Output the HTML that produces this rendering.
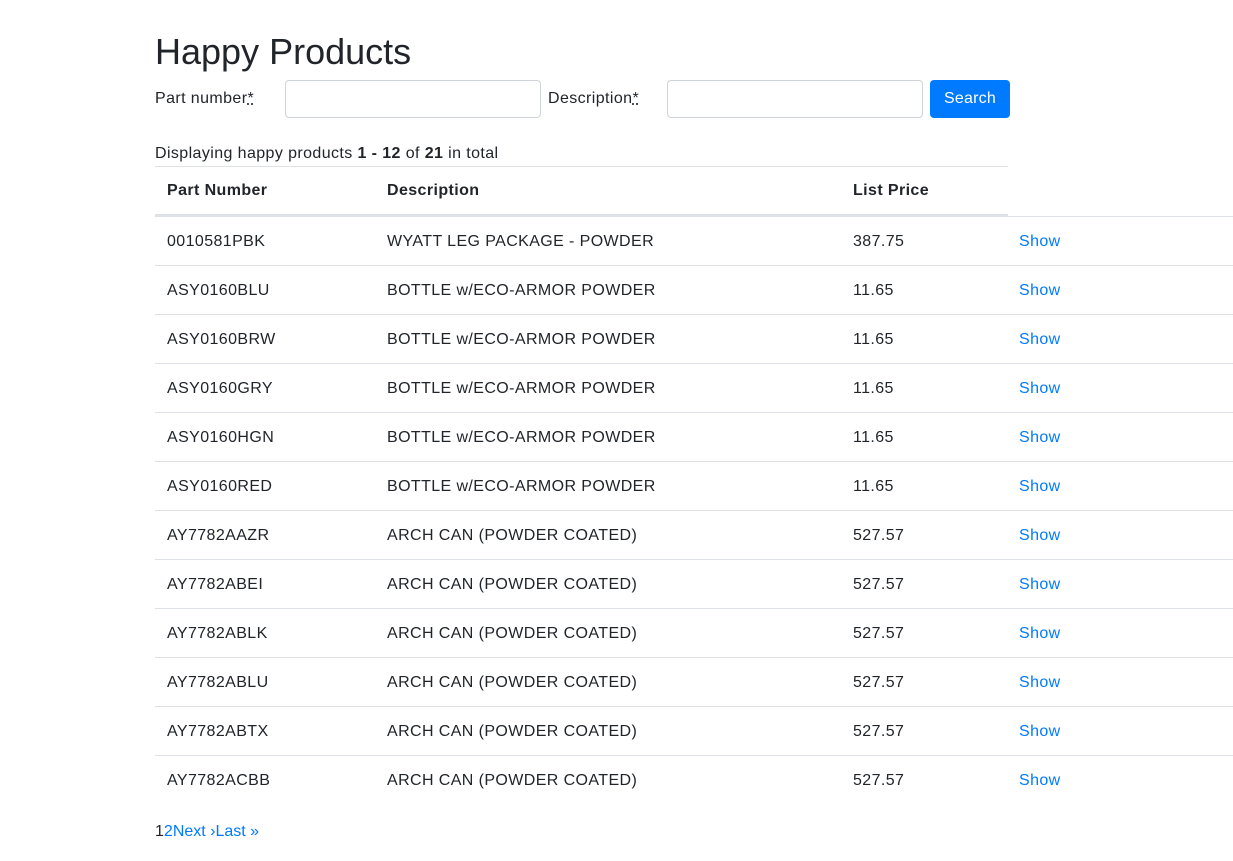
<!DOCTYPE html>
<html><head><meta charset="utf-8"><style>
*{box-sizing:border-box;margin:0;padding:0}
body{width:1233px;height:861px;background:#fff;font-family:"Liberation Sans",sans-serif;color:#212529;font-size:16px;position:relative;overflow:hidden;letter-spacing:.4px}
.a{position:absolute;white-space:nowrap}
h1{position:absolute;left:155px;top:31px;font-size:36px;font-weight:400;line-height:42px;letter-spacing:0}
.inp{position:absolute;top:80px;height:38px;width:256px;border:1px solid #ced4da;border-radius:4px}
.btn{position:absolute;left:930px;top:80px;width:80px;height:38px;background:#007bff;color:#fff;border-radius:4px;text-align:center;line-height:38px;font-size:16px}
abbr{text-decoration:underline dotted;}
.row{position:absolute;left:155px;width:1078px;height:49px;border-top:1px solid #dee2e6}
.row span{position:absolute;top:1px;line-height:48px}
.c1{left:12px}.c2{left:232px}.c3{left:698px}.c4{left:864px;color:#007bff}
a{color:#007bff;text-decoration:none}
</style></head><body>
<h1>Happy Products</h1>
<div class="a" style="left:155px;top:89px;line-height:20px">Part number<abbr>*</abbr></div>
<div class="inp" style="left:285px"></div>
<div class="a" style="left:548px;top:89px;line-height:20px">Description<abbr>*</abbr></div>
<div class="inp" style="left:667px"></div>
<div class="btn" style="letter-spacing:.2px">Search</div>
<div class="a" style="left:155px;top:144px;line-height:20px">Displaying happy products <b>1&nbsp;-&nbsp;12</b> of <b>21</b> in total</div>
<div class="a" style="left:155px;top:166px;width:853px;height:50px;border-top:1px solid #dee2e6;border-bottom:2px solid #dee2e6;font-weight:bold">
<span class="a" style="left:12px;top:15px">Part Number</span>
<span class="a" style="left:232px;top:15px">Description</span>
<span class="a" style="left:698px;top:15px">List Price</span>
</div>
<div class="row" style="top:216px"><span class="c1">0010581PBK</span><span class="c2">WYATT LEG PACKAGE - POWDER</span><span class="c3">387.75</span><span class="c4">Show</span></div>
<div class="row" style="top:265px"><span class="c1">ASY0160BLU</span><span class="c2">BOTTLE w/ECO-ARMOR POWDER</span><span class="c3">11.65</span><span class="c4">Show</span></div>
<div class="row" style="top:314px"><span class="c1">ASY0160BRW</span><span class="c2">BOTTLE w/ECO-ARMOR POWDER</span><span class="c3">11.65</span><span class="c4">Show</span></div>
<div class="row" style="top:363px"><span class="c1">ASY0160GRY</span><span class="c2">BOTTLE w/ECO-ARMOR POWDER</span><span class="c3">11.65</span><span class="c4">Show</span></div>
<div class="row" style="top:412px"><span class="c1">ASY0160HGN</span><span class="c2">BOTTLE w/ECO-ARMOR POWDER</span><span class="c3">11.65</span><span class="c4">Show</span></div>
<div class="row" style="top:461px"><span class="c1">ASY0160RED</span><span class="c2">BOTTLE w/ECO-ARMOR POWDER</span><span class="c3">11.65</span><span class="c4">Show</span></div>
<div class="row" style="top:510px"><span class="c1">AY7782AAZR</span><span class="c2">ARCH CAN (POWDER COATED)</span><span class="c3">527.57</span><span class="c4">Show</span></div>
<div class="row" style="top:559px"><span class="c1">AY7782ABEI</span><span class="c2">ARCH CAN (POWDER COATED)</span><span class="c3">527.57</span><span class="c4">Show</span></div>
<div class="row" style="top:608px"><span class="c1">AY7782ABLK</span><span class="c2">ARCH CAN (POWDER COATED)</span><span class="c3">527.57</span><span class="c4">Show</span></div>
<div class="row" style="top:657px"><span class="c1">AY7782ABLU</span><span class="c2">ARCH CAN (POWDER COATED)</span><span class="c3">527.57</span><span class="c4">Show</span></div>
<div class="row" style="top:706px"><span class="c1">AY7782ABTX</span><span class="c2">ARCH CAN (POWDER COATED)</span><span class="c3">527.57</span><span class="c4">Show</span></div>
<div class="row" style="top:755px"><span class="c1">AY7782ACBB</span><span class="c2">ARCH CAN (POWDER COATED)</span><span class="c3">527.57</span><span class="c4">Show</span></div>
<div class="a" style="left:155px;top:822px;line-height:20px;letter-spacing:0">1<a>2</a><a>Next ›</a><a>Last »</a></div>
</body></html>
